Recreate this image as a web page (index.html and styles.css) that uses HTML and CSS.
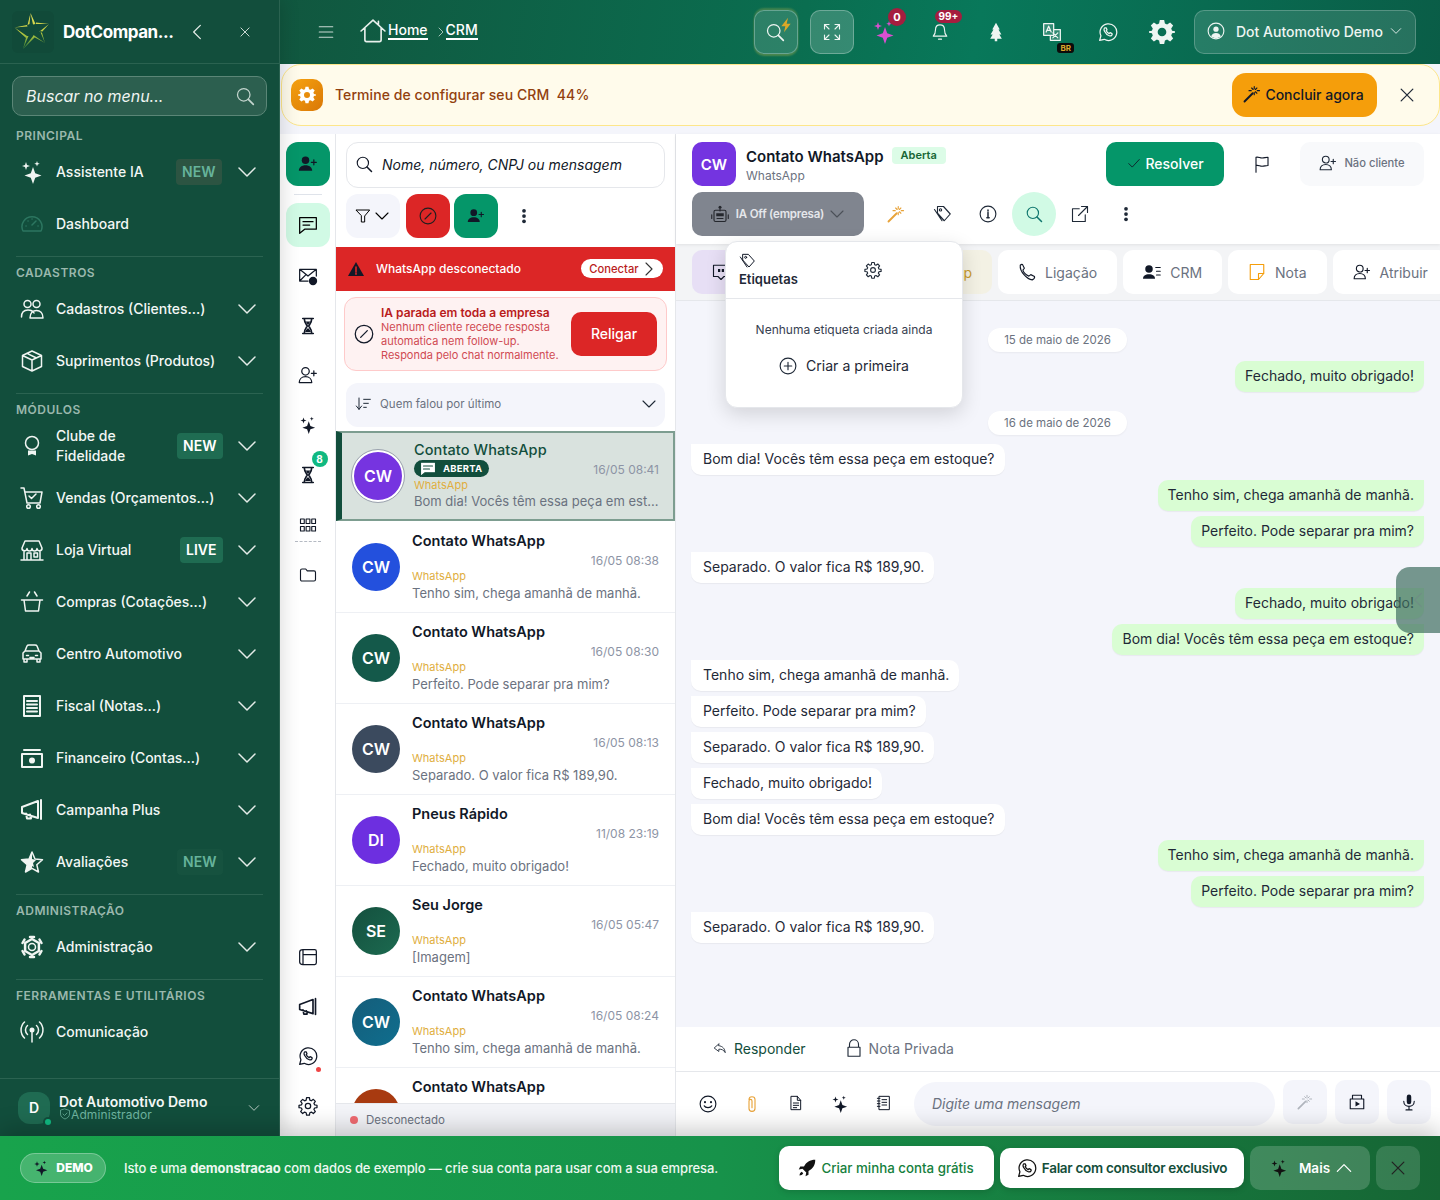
FILE: index.html
```html
<!DOCTYPE html>
<html lang="pt-BR">
<head>
<meta charset="utf-8">
<title>CRM</title>
<link rel="stylesheet" href="styles.css">
</head>
<body>
<svg class="defs" width="0" height="0" aria-hidden="true">
<defs>
<symbol id="i-down" viewBox="0 0 24 24"><path d="M4 8l8 8 8-8"/></symbol>
<symbol id="i-up" viewBox="0 0 24 24"><path d="M4 16l8-8 8 8"/></symbol>
<symbol id="i-left" viewBox="0 0 24 24"><path d="M16 4l-8 8 8 8"/></symbol>
<symbol id="i-right" viewBox="0 0 24 24"><path d="M8 4l8 8-8 8"/></symbol>
<symbol id="i-x" viewBox="0 0 24 24"><path d="M5 5l14 14M19 5L5 19"/></symbol>
<symbol id="i-search" viewBox="0 0 24 24"><circle cx="10.5" cy="10.5" r="7.5"/><path d="M16 16l6 6" stroke-width="2"/></symbol>
<symbol id="i-spark" viewBox="0 0 24 24"><path class="f" d="M13 7l2.200 6.300L21.500 15.500l-6.300 2.200L13 24l-2.200-6.300L4.500 15.500l6.300-2.200zM6 2l1 3 3 1-3 1-1 3-1-3-3-1 3-1zM17 1l.7 2 2 .7-2 .7-.7 2-.7-2-2-.7 2-.7z"/></symbol>
<symbol id="i-gauge" viewBox="0 0 24 24"><path d="M3 19a10 10 0 1 1 18 0zM12 13l4-4M6 14h.1M8 9h.1M12 7h.1M18 14h.1"/></symbol>
<symbol id="i-users" viewBox="0 0 24 24"><circle cx="7.500" cy="7" r="3.500"/><circle cx="16.500" cy="7" r="3.500"/><path d="M1.500 20c0-5 3-7 6.500-7 4 0 5.500 2 6 3M10 21c0-5 3-7.500 6.500-7.500S23 16 23 21z"/></symbol>
<symbol id="i-box" viewBox="0 0 24 24"><path d="M12 2l9.500 4.500v11L12 22l-9.500-4.500v-11zM2.500 6.500L12 11l9.500-4.500M12 11v11M7 4.300l9.500 4.700"/></symbol>
<symbol id="i-ribbon" viewBox="0 0 24 24"><circle cx="12" cy="9" r="6.500"/><path d="M8 16.500v5l4-1.500 4 1.500v-5" class="f"/></symbol>
<symbol id="i-cart" viewBox="0 0 24 24"><path d="M1 2h3l3 15h13l2-11H5M9 10l2.500 2.500L16 8"/><circle cx="8.500" cy="20.500" r="1.800"/><circle cx="18.500" cy="20.500" r="1.800"/></symbol>
<symbol id="i-store" viewBox="0 0 24 24"><path d="M5 3h14l3 7a2.500 2.500 0 0 1-5 .5 2.500 2.500 0 0 1-5 0 2.500 2.500 0 0 1-5 0 2.500 2.500 0 0 1-5-.5zM4 13v9h16v-9M1 22h22M7 15h4v7H7zM14 15h3.500v4H14z"/></symbol>
<symbol id="i-basket" viewBox="0 0 24 24"><path d="M1.500 10h21M4 10l1.500 11h13L20 10M7 6l2.500-4M17 6l-2.500-4"/></symbol>
<symbol id="i-car" viewBox="0 0 24 24"><path d="M5 9l2-5c.300-.700 1-1 2-1h6c1 0 1.700.300 2 1l2 5 2 2v6H3v-6zM5 9h14M4 17v3h3v-3M17 17v3h3v-3M6.500 13.500h2M15.500 13.500h2M10 15.500h4"/></symbol>
<symbol id="i-receipt" viewBox="0 0 24 24"><path d="M4 2h16v20H4zM7 7h10M7 10.500h10M7 14h10M7 17.500h10" stroke-width="2"/></symbol>
<symbol id="i-cash" viewBox="0 0 24 24"><path d="M2 8h20v13H2zM4 4h16" stroke-width="2"/><circle class="f" cx="12" cy="14.500" r="3"/></symbol>
<symbol id="i-mega" viewBox="0 0 24 24"><path d="M2 9l16-6v17L2 15zM21 2v19M6 15.500l1 5h4l-1-4" stroke-width="2"/></symbol>
<symbol id="i-star" viewBox="0 0 24 24"><path d="M12 2l3 7 7.500.7-5.700 5 1.700 7.300L12 18.300 5.500 22l1.700-7.300-5.700-5L9 9z"/><path class="f" d="M12 2v16.300L5.500 22l1.700-7.300-5.700-5L9 9z"/><path class="f" d="M12 9l4 1-3 3 1 4-2-1z"/></symbol>
<symbol id="i-cogh" viewBox="0 0 24 24"><path d="M12 4l6.900 4v8L12 20l-6.900-4V8z" stroke-width="2.500"/><path d="M10 2h4M10 22h4M2.500 8l2-3.500M21.500 8l-2-3.500M2.500 16l2 3.500M21.500 16l-2 3.500" stroke-width="2.500"/><circle cx="12" cy="12" r="3.500"/></symbol>
<symbol id="i-radio" viewBox="0 0 24 24"><circle class="f" cx="12" cy="10" r="2.500"/><path d="M12 10v12M7.500 14.500a6 6 0 0 1 0-9M16.500 5.500a6 6 0 0 1 0 9M4.500 18a11 11 0 0 1 0-16M19.500 2a11 11 0 0 1 0 16"/></symbol>
<symbol id="i-menu" viewBox="0 0 24 24"><path d="M3 5h18M3 12h18M3 19h18"/></symbol>
<symbol id="i-home" viewBox="0 0 24 24"><path d="M1 12L12 2l11 10M4.500 9v11c0 1 .5 1.800 1.500 1.800h12c1 0 1.500-.8 1.500-1.800V9M17 3v3"/></symbol>
<symbol id="i-expand" viewBox="0 0 24 24"><path d="M2 8V2h6M2 2l6 6M22 8V2h-6M22 2l-6 6M2 16v6h6M2 22l6-6M22 16v6h-6M22 22l-6-6"/></symbol>
<symbol id="i-bolt" viewBox="0 0 24 24"><path class="f" d="M15 1L5 14h6l-2 9 10-13h-6z"/></symbol>
<symbol id="i-bell" viewBox="0 0 24 24"><path d="M12 2.500c-4 0-6 3-6 6.500 0 5-1.500 7-3 8.500h18c-1.500-1.500-3-3.500-3-8.500 0-3.500-2-6.500-6-6.500zM10 21.500h4"/></symbol>
<symbol id="i-tree" viewBox="0 0 24 24"><path class="f" d="M12 1l4.500 8H15l3.500 6H16l3 5h-5.500v3h-3v-3H5l3-5H5.500L9 9H7.500z"/></symbol>
<symbol id="i-translate" viewBox="0 0 24 24"><path class="f" d="M2 2h12v14H2zM14 9h8v13H10v-6h4z" style="fill-opacity:.18"/><path d="M2 2h12v14H2zM14 9h8v13H10v-6"/><path d="M5 12l3-7 3 7M6 10h4M13 13l6 6M19 13l-6 6"/></symbol>
<symbol id="i-wa" viewBox="0 0 24 24"><path d="M2 22l1.500-5.500A10 10 0 1 1 7.500 20.800zM8 7c-1 1-1 2.500 0 4.500 1.500 3 4 4.500 5.500 5 1.500.4 3 0 3.500-1.500l-.2-1-2.300-1.200-1 1.200c-1.500-.5-3-2-3.700-3.700l1-1L9.800 7z"/></symbol>
<symbol id="i-gear" viewBox="0 0 24 24"><path class="f" fill-rule="evenodd" d="M10 1h4l.7 3.200 2 .8 2.800-1.800 2.800 2.800L20.500 8.800l.8 2 3.200.7v1l-3.200.7-.8 2 1.800 2.800-2.800 2.800-2.800-1.800-2 .8-.7 3.200h-4l-.7-3.200-2-.8-2.800 1.800-2.800-2.800L3.500 15.200l-.8-2L-.5 12.500v-1l3.200-.7.8-2L1.700 6 4.500 3.200 7.300 5l2-.8zM12 8a4 4 0 1 0 0 8 4 4 0 0 0 0-8z"/></symbol>
<symbol id="i-usercircle" viewBox="0 0 24 24"><circle cx="12" cy="12" r="10.500"/><circle cx="12" cy="9.500" r="3.500" class="f"/><path class="f" d="M5.500 19c1-3 3.500-4.500 6.500-4.500s5.500 1.500 6.500 4.500c-1.500 1.500-4 2.500-6.500 2.500S7 20.500 5.500 19z"/></symbol>
<symbol id="i-gearl" viewBox="0 0 24 24"><circle cx="12" cy="12" r="3.200"/><path d="M10.300 2h3.400l.5 2.900 1.800.8 2.400-1.700 2.400 2.400-1.700 2.400.8 1.800 2.900.5v2.800l-2.900.5-.8 1.800 1.700 2.400-2.400 2.400-2.400-1.700-1.800.8-.5 2.900h-3.400l-.5-2.900-1.800-.8L5.600 21l-2.400-2.400 1.700-2.400-.8-1.800L1.200 14v-2.800l2.900-.5.800-1.800L3.200 6.500l2.400-2.400L8 5.800l1.800-.8z"/></symbol>
<symbol id="i-wand" viewBox="0 0 24 24"><path d="M2 22L13 11" stroke-width="2.500"/><path d="M15 2v3M15 10v3M19 7.500h3M8 7.500h3M11.500 4l2 2M18.500 4l-2 2M18.500 11l-2-2" /></symbol>
<symbol id="i-userplusf" viewBox="0 0 24 24"><circle class="f" cx="9" cy="7.500" r="4.500"/><path class="f" d="M1 20c0-4 3.500-6.500 8-6.500s8 2.500 8 6.500z"/><path d="M19 7v6M16 10h6"/></symbol>
<symbol id="i-userplus" viewBox="0 0 24 24"><circle cx="9" cy="7.500" r="4.500"/><path d="M1.500 21c0-4 3-7 7.500-7s7.500 3 7.500 7zM19 7v6M16 10h6"/></symbol>
<symbol id="i-chat" viewBox="0 0 24 24"><path d="M2 3h20v14H8l-6 5zM6 8h12M6 12h8"/></symbol>
<symbol id="i-mailclock" viewBox="0 0 24 24"><path d="M12 18H2V4h20v8M2 4l10 8 10-8M2 18l7-7"/><circle class="f" cx="18" cy="18" r="5"/></symbol>
<symbol id="i-hour" viewBox="0 0 24 24"><path d="M5 2h14M5 22h14M7 2c0 5 2 7 4 10-2 3-4 5-4 10M17 2c0 5-2 7-4 10 2 3 4 5 4 10" stroke-width="2.200"/><path class="f" d="M8 20c1-3 3-4.500 4-5.500 1 1 3 2.500 4 5.500zM9 6h6l-3 5z"/></symbol>
<symbol id="i-grid" viewBox="0 0 24 24"><path d="M2 4h5v6H2zM9.500 4h5v6h-5zM17 4h5v6h-5zM2 14h5v6H2zM9.500 14h5v6h-5zM17 14h5v6h-5z"/></symbol>
<symbol id="i-folder" viewBox="0 0 24 24"><path d="M2 6c0-1 .7-2 2-2h5l2 2.500h9c1.200 0 2 .8 2 2V18c0 1-.8 2-2 2H4c-1.300 0-2-1-2-2z"/></symbol>
<symbol id="i-cards" viewBox="0 0 24 24"><path d="M6 3h14c1 0 2 1 2 2v14c0 1-1 2-2 2H6zM6 9h16M6 3C3.500 3 2 4 2 6v12c0 2 1.500 3 4 3" /></symbol>
<symbol id="i-filter" viewBox="0 0 24 24"><path d="M2 3h20l-7.500 9v9h-5v-9z"/></symbol>
<symbol id="i-ban" viewBox="0 0 24 24"><circle cx="12" cy="12" r="10.500"/><path d="M8 16l8-8"/></symbol>
<symbol id="i-alert" viewBox="0 0 24 24"><path class="f" d="M12 1.500L24 22.500H0z"/><path d="M12 9v7M12 18.200v1.500" style="stroke:#dc2626" stroke-width="2.400"/></symbol>
<symbol id="i-sort" viewBox="0 0 24 24"><path d="M6 3v17M2 15l4 5 4-5M13 5h10M13 11h7M13 17h4"/></symbol>
<symbol id="i-flag" viewBox="0 0 24 24"><path d="M4 23V3c3-1 5 1 8 1s5-1 8-1v11c-3 0-5 1-8 1s-5-2-8-1"/></symbol>
<symbol id="i-check" viewBox="0 0 24 24"><path d="M3 13l6 6L21 6"/></symbol>
<symbol id="i-robot" viewBox="0 0 24 24"><circle class="f" cx="12" cy="3" r="2"/><path d="M12 5v3"/><path d="M4 9c0-1 1-2 2-2h12c1 0 2 1 2 2v11c0 1-1 2-2 2H6c-1 0-2-1-2-2zM1 13v5M23 13v5M8 18h8"/><path class="f" d="M7 11h10v4H7z"/></symbol>
<symbol id="i-tag" viewBox="0 0 24 24"><path d="M6 2h8l9 10-8 9-9-10zM2 6l10 15" /><circle cx="10" cy="6.500" r="1.500"/></symbol>
<symbol id="i-info" viewBox="0 0 24 24"><circle cx="12" cy="12" r="10.500"/><path d="M12 10v7M10.500 17h3M12 6.500v1.500" stroke-width="2"/></symbol>
<symbol id="i-ext" viewBox="0 0 24 24"><path d="M11 5H2v17h17v-9M10 14L22 2M14 2h8v8"/></symbol>
<symbol id="i-dots" viewBox="0 0 24 24"><circle class="f" cx="12" cy="5" r="2.500"/><circle class="f" cx="12" cy="12" r="2.500"/><circle class="f" cx="12" cy="19" r="2.500"/></symbol>
<symbol id="i-quote" viewBox="0 0 24 24"><path d="M2 3h20v15h-6l-4 4-4-4H2z"/><path d="M8 8h3v4H8zM13 8h3v4h-3z" class="f"/></symbol>
<symbol id="i-phone" viewBox="0 0 24 24"><path d="M3 3c1-1 2-1.500 3-1l2.500 5-2 2.500c1 3 4.500 6.500 8 8l2.500-2 5 2.500c.5 1.500-1 3.500-3 4.500C12 22 2 11 3 3z"/></symbol>
<symbol id="i-crm" viewBox="0 0 24 24"><circle class="f" cx="8" cy="8" r="5"/><path class="f" d="M0 21c0-4 3-6 8-6s8 2 8 6z"/><path d="M17 6h6M18 11h5M18 16h5"/></symbol>
<symbol id="i-note" viewBox="0 0 24 24"><path d="M3 2h18v12l-7 8H3zM21 14h-7v8"/></symbol>
<symbol id="i-plusc" viewBox="0 0 24 24"><circle cx="12" cy="12" r="10.500"/><path d="M12 7v10M7 12h10"/></symbol>
<symbol id="i-reply" viewBox="0 0 24 24"><path d="M10 5l-8 7 8 6v-4c5 0 8 1 11 6-1-7-4-11-11-12z"/></symbol>
<symbol id="i-lock" viewBox="0 0 24 24"><path d="M6 11V7a6 6 0 0 1 12 0v4M4 11h16v12H4z"/></symbol>
<symbol id="i-smile" viewBox="0 0 24 24"><circle cx="12" cy="12" r="10.500"/><circle class="f" cx="8" cy="9.500" r="1.400"/><circle class="f" cx="16" cy="9.500" r="1.400"/><path d="M7 14.500c1.500 3 8.500 3 10 0"/></symbol>
<symbol id="i-clip" viewBox="0 0 24 24"><path d="M8 6c0-5 8-5 8 0v12c0 5-8 5-8 0V8c0-3 4-3 4 0v9"/></symbol>
<symbol id="i-doc" viewBox="0 0 24 24"><path d="M5 2h9l5 6v14H5zM14 2v6h5M8 12h8M8 15.500h8M8 19h5"/></symbol>
<symbol id="i-book" viewBox="0 0 24 24"><path d="M5 2h15v20H5zM9 7h7M9 11h7M9 15h7M2 5h4M2 9h4M2 13h4M2 17h4"/></symbol>
<symbol id="i-video" viewBox="0 0 24 24"><path d="M3 8h18v13H3zM6 3h12v5H6z"/><path class="f" d="M10 11l6 3.500-6 3.500z"/></symbol>
<symbol id="i-mic" viewBox="0 0 24 24"><path class="f" d="M9 5a3 3 0 0 1 6 0v7a3 3 0 0 1-6 0z"/><path d="M5 11c0 9 14 9 14 0M12 18v4M8 22.500h8"/></symbol>
<symbol id="i-rocket" viewBox="0 0 24 24"><path class="f" d="M23 1c-7 0-12 3-15 9H3l-2 4 5-1 5 5-1 5 4-2v-5c6-3 9-8 9-15zM5 17c-2 1-3 3-3 5 2 0 4-1 5-3z"/></symbol>
<symbol id="i-shield" viewBox="0 0 24 24"><path d="M12 2l9 3v7c0 5-4 8-9 10-5-2-9-5-9-10V5zM8 12l3 3 5-5"/></symbol>
</defs>
</svg>

<div class="app">
  <div class="app-main">
    <aside class="sidebar">
      <div class="brand">
        <div class="logo">
          <svg viewBox="15 14 36 36" class="logo-star"><defs><linearGradient id="lg" gradientUnits="userSpaceOnUse" x1="32" y1="13" x2="32" y2="49"><stop offset="0" stop-color="#efe35a"/><stop offset=".55" stop-color="#b9c93f"/><stop offset="1" stop-color="#3f8a3a"/></linearGradient></defs><path fill="url(#lg)" d="M30.500 13L35.500 24 33 24.500zM30.500 13L27.500 25 29.500 24zM49 24L36 24 36 22.500zM49 24L39.500 31.500 41 33zM45 43L40 31 41.500 31zM45 43L33 36.500 33.500 35zM23 49L33.500 35.500 35 37zM23 49L26.500 36 28.500 36zM14.500 27.500L27 25 27.500 26.500zM14.500 27.500L27 36 26 38z"/></svg>
        </div>
        <span class="brand-name">DotCompan...</span>
        <svg class="ic s20 brand-back"><use href="#i-left"/></svg>
        <svg class="ic s14 brand-close"><use href="#i-x"/></svg>
      </div>
      <div class="menu-search"><span>Buscar no menu...</span><svg class="ic s20"><use href="#i-search"/></svg></div>
      <nav class="nav">
        <div class="nav-label first">PRINCIPAL</div>
        <a class="nav-item"><svg class="ic s24"><use href="#i-spark"/></svg><span class="nav-text">Assistente IA</span><em class="tag dim warm">NEW</em><svg class="ic s24 chev"><use href="#i-down"/></svg></a>
        <a class="nav-item"><svg class="ic s24 faint"><use href="#i-gauge"/></svg><span class="nav-text">Dashboard</span></a>
        <div class="nav-div"></div>
        <div class="nav-label">CADASTROS</div>
        <a class="nav-item"><svg class="ic s24"><use href="#i-users"/></svg><span class="nav-text">Cadastros (Clientes...)</span><svg class="ic s24 chev"><use href="#i-down"/></svg></a>
        <a class="nav-item"><svg class="ic s24"><use href="#i-box"/></svg><span class="nav-text">Suprimentos (Produtos)</span><svg class="ic s24 chev"><use href="#i-down"/></svg></a>
        <div class="nav-div"></div>
        <div class="nav-label">MÓDULOS</div>
        <a class="nav-item"><svg class="ic s24"><use href="#i-ribbon"/></svg><span class="nav-text two">Clube de Fidelidade</span><em class="tag">NEW</em><svg class="ic s24 chev"><use href="#i-down"/></svg></a>
        <a class="nav-item"><svg class="ic s24"><use href="#i-cart"/></svg><span class="nav-text">Vendas (Orçamentos...)</span><svg class="ic s24 chev"><use href="#i-down"/></svg></a>
        <a class="nav-item"><svg class="ic s24"><use href="#i-store"/></svg><span class="nav-text">Loja Virtual</span><em class="tag">LIVE</em><svg class="ic s24 chev"><use href="#i-down"/></svg></a>
        <a class="nav-item"><svg class="ic s24"><use href="#i-basket"/></svg><span class="nav-text">Compras (Cotações...)</span><svg class="ic s24 chev"><use href="#i-down"/></svg></a>
        <a class="nav-item"><svg class="ic s24"><use href="#i-car"/></svg><span class="nav-text">Centro Automotivo</span><svg class="ic s24 chev"><use href="#i-down"/></svg></a>
        <a class="nav-item"><svg class="ic s24"><use href="#i-receipt"/></svg><span class="nav-text">Fiscal (Notas...)</span><svg class="ic s24 chev"><use href="#i-down"/></svg></a>
        <a class="nav-item"><svg class="ic s24"><use href="#i-cash"/></svg><span class="nav-text">Financeiro (Contas...)</span><svg class="ic s24 chev"><use href="#i-down"/></svg></a>
        <a class="nav-item"><svg class="ic s24"><use href="#i-mega"/></svg><span class="nav-text">Campanha Plus</span><svg class="ic s24 chev"><use href="#i-down"/></svg></a>
        <a class="nav-item"><svg class="ic s24"><use href="#i-star"/></svg><span class="nav-text">Avaliações</span><em class="tag dim">NEW</em><svg class="ic s24 chev"><use href="#i-down"/></svg></a>
        <div class="nav-div"></div>
        <div class="nav-label">ADMINISTRAÇÃO</div>
        <a class="nav-item"><svg class="ic s24"><use href="#i-cogh"/></svg><span class="nav-text">Administração</span><svg class="ic s24 chev"><use href="#i-down"/></svg></a>
        <div class="nav-div"></div>
        <div class="nav-label">FERRAMENTAS E UTILITÁRIOS</div>
        <a class="nav-item"><svg class="ic s24"><use href="#i-radio"/></svg><span class="nav-text">Comunicação</span></a>
      </nav>
      <div class="side-user">
        <div class="side-av">D<i></i></div>
        <div class="side-who"><strong>Dot Automotivo Demo</strong><small><svg class="ic s12"><use href="#i-shield"/></svg>Administrador</small></div>
        <svg class="ic s14 side-chev"><use href="#i-down"/></svg>
      </div>
    </aside>

    <div class="content">
      <header class="topbar">
        <svg class="ic s18 burger"><use href="#i-menu"/></svg>
        <div class="crumbs">
          <svg class="ic s26"><use href="#i-home"/></svg>
          <a>Home</a><svg class="ic s12 crumb-sep"><use href="#i-right"/></svg><a>CRM</a>
        </div>
        <div class="top-right">
          <button class="glass gold"><svg class="ic s20"><use href="#i-search"/></svg><svg class="ic s16 bolt"><use href="#i-bolt"/></svg></button>
          <button class="glass lighter"><svg class="ic s18"><use href="#i-expand"/></svg></button>
          <div class="top-icons">
            <span class="t-ic"><svg class="ic s24 pink"><use href="#i-spark"/></svg><b class="bdg round">0</b></span>
            <span class="t-ic"><svg class="ic s18"><use href="#i-bell"/></svg><b class="bdg wide">99+</b></span>
            <span class="t-ic"><svg class="ic s20"><use href="#i-tree"/></svg></span>
            <span class="t-ic"><svg class="ic s20"><use href="#i-translate"/></svg><b class="bdg-br">BR</b></span>
            <span class="t-ic"><svg class="ic s20"><use href="#i-wa"/></svg></span>
            <span class="t-ic t-gear"><svg class="ic s26"><use href="#i-gear"/></svg></span>
          </div>
          <button class="user-btn"><svg class="ic s18"><use href="#i-usercircle"/></svg><span>Dot Automotivo Demo</span><svg class="ic s14"><use href="#i-down"/></svg></button>
        </div>
      </header>

      <section class="setup">
        <span class="setup-ic"><svg class="ic s18"><use href="#i-gear"/></svg></span>
        <p>Termine de configurar seu CRM&nbsp; 44%</p>
        <button class="setup-go"><svg class="ic s18"><use href="#i-wand"/></svg>Concluir agora</button>
        <svg class="ic s20 setup-x"><use href="#i-x"/></svg>
      </section>

      <main class="work">
        <div class="rail">
          <button class="rail-btn solid"><svg class="ic s20"><use href="#i-userplusf"/></svg></button>
          <div class="rail-sep"></div>
          <button class="rail-btn active"><svg class="ic s20"><use href="#i-chat"/></svg></button>
          <span class="rail-ic"><svg class="ic s20"><use href="#i-mailclock"/></svg></span>
          <span class="rail-ic"><svg class="ic s18"><use href="#i-hour"/></svg></span>
          <span class="rail-ic"><svg class="ic s20"><use href="#i-userplus"/></svg></span>
          <span class="rail-ic"><svg class="ic s18"><use href="#i-spark"/></svg></span>
          <span class="rail-ic"><svg class="ic s18"><use href="#i-hour"/></svg><b class="rail-count">8</b></span>
          <span class="rail-ic"><svg class="ic s18"><use href="#i-grid"/></svg></span>
          <div class="rail-dash"></div>
          <span class="rail-ic folder"><svg class="ic s18"><use href="#i-folder"/></svg></span>
          <div class="rail-bottom">
            <span class="rail-ic"><svg class="ic s20"><use href="#i-cards"/></svg></span>
            <span class="rail-ic"><svg class="ic s20"><use href="#i-mega"/></svg></span>
            <span class="rail-ic"><svg class="ic s20"><use href="#i-wa"/></svg><i class="rail-dot"></i></span>
            <span class="rail-ic"><svg class="ic s20"><use href="#i-gearl"/></svg></span>
          </div>
        </div>

        <div class="list">
          <div class="list-tools">
            <div class="find"><svg class="ic s18"><use href="#i-search"/></svg><span>Nome, número, CNPJ ou mensagem</span></div>
            <div class="tool-row">
              <button class="tool filter"><svg class="ic s16"><use href="#i-filter"/></svg><svg class="ic s18"><use href="#i-down"/></svg></button>
              <button class="tool red"><svg class="ic s18"><use href="#i-ban"/></svg></button>
              <button class="tool green"><svg class="ic s18"><use href="#i-userplusf"/></svg></button>
              <span class="tool-dots"><svg class="ic s18"><use href="#i-dots"/></svg></span>
            </div>
          </div>
          <div class="wa-alert">
            <svg class="ic s16 alert-ic"><use href="#i-alert"/></svg>
            <span>WhatsApp desconectado</span>
            <button>Conectar<svg class="ic s18"><use href="#i-right"/></svg></button>
          </div>
          <div class="ia-box">
            <svg class="ic s20"><use href="#i-ban"/></svg>
            <div class="ia-text"><strong>IA parada em toda a empresa</strong><span>Nenhum cliente recebe resposta automatica nem follow-up. Responda pelo chat normalmente.</span></div>
            <button>Religar</button>
          </div>
          <div class="sorter"><svg class="ic s16"><use href="#i-sort"/></svg><span>Quem falou por último</span><svg class="ic s18"><use href="#i-down"/></svg></div>

          <div class="convs">
            <article class="conv selected">
              <div class="av ring c-purple">CW</div>
              <div class="conv-b">
                <h3>Contato WhatsApp</h3>
                <div class="sel-row"><span class="open-pill"><svg class="ic s18"><use href="#i-chat"/></svg>ABERTA</span><time>16/05 08:41</time></div>
                <div class="src">WhatsApp</div>
                <p>Bom dia! Vocês têm essa peça em est...</p>
              </div>
            </article>
            <article class="conv"><div class="av c-blue">CW</div><div class="conv-b"><h3>Contato WhatsApp</h3><time>16/05 08:38</time><div class="src">WhatsApp</div><p>Tenho sim, chega amanhã de manhã.</p></div></article>
            <article class="conv"><div class="av c-green">CW</div><div class="conv-b"><h3>Contato WhatsApp</h3><time>16/05 08:30</time><div class="src">WhatsApp</div><p>Perfeito. Pode separar pra mim?</p></div></article>
            <article class="conv"><div class="av c-slate">CW</div><div class="conv-b"><h3>Contato WhatsApp</h3><time>16/05 08:13</time><div class="src">WhatsApp</div><p>Separado. O valor fica R$ 189,90.</p></div></article>
            <article class="conv"><div class="av c-violet">DI</div><div class="conv-b"><h3>Pneus Rápido</h3><time>11/08 23:19</time><div class="src">WhatsApp</div><p>Fechado, muito obrigado!</p></div></article>
            <article class="conv"><div class="av c-se">SE</div><div class="conv-b"><h3>Seu Jorge</h3><time>16/05 05:47</time><div class="src">WhatsApp</div><p>[Imagem]</p></div></article>
            <article class="conv"><div class="av c-teal">CW</div><div class="conv-b"><h3>Contato WhatsApp</h3><time>16/05 08:24</time><div class="src">WhatsApp</div><p>Tenho sim, chega amanhã de manhã.</p></div></article>
            <article class="conv last"><div class="av c-rust"></div><div class="conv-b"><h3>Contato WhatsApp</h3></div></article>
          </div>
          <div class="list-foot"><i></i>Desconectado</div>
        </div>

        <div class="chat">
          <div class="chat-head">
            <div class="head-row">
              <div class="chat-av">CW</div>
              <div class="chat-who"><div><strong>Contato WhatsApp</strong><span class="status">Aberta</span></div><small>WhatsApp</small></div>
              <button class="resolve"><svg class="ic s14"><use href="#i-check"/></svg>Resolver</button>
              <span class="flag"><svg class="ic s18"><use href="#i-flag"/></svg></span>
              <button class="noclient"><svg class="ic s18"><use href="#i-userplus"/></svg>Não cliente</button>
            </div>
            <div class="head-row second">
              <button class="ia-off"><svg class="ic s18"><use href="#i-robot"/></svg><span>IA Off (empresa)</span><svg class="ic s18"><use href="#i-down"/></svg></button>
              <div class="head-tools">
                <span class="h-ic wand"><svg class="ic s18"><use href="#i-wand"/></svg></span>
                <span class="h-ic"><svg class="ic s18"><use href="#i-tag"/></svg></span>
                <span class="h-ic"><svg class="ic s18"><use href="#i-info"/></svg></span>
                <span class="h-ic on"><svg class="ic s18"><use href="#i-search"/></svg></span>
                <span class="h-ic"><svg class="ic s18"><use href="#i-ext"/></svg></span>
                <span class="h-ic"><svg class="ic s18"><use href="#i-dots"/></svg></span>
              </div>
            </div>
          </div>
          <div class="tabs">
            <a class="tab t-purple"><svg class="ic s18"><use href="#i-quote"/></svg></a>
            <a class="tab t-beige">WhatsApp</a>
            <a class="tab"><svg class="ic s18"><use href="#i-phone"/></svg>Ligação</a>
            <a class="tab"><svg class="ic s18"><use href="#i-crm"/></svg>CRM</a>
            <a class="tab"><svg class="ic s18 amber"><use href="#i-note"/></svg>Nota</a>
            <a class="tab"><svg class="ic s18"><use href="#i-userplus"/></svg>Atribuir</a>
          </div>
          <div class="msgs">
            <div class="date">15 de maio de 2026</div>
            <div class="m out">Fechado, muito obrigado!</div>
            <div class="date">16 de maio de 2026</div>
            <div class="m in">Bom dia! Vocês têm essa peça em estoque?</div>
            <div class="m out">Tenho sim, chega amanhã de manhã.</div>
            <div class="m out">Perfeito. Pode separar pra mim?</div>
            <div class="m in">Separado. O valor fica R$ 189,90.</div>
            <div class="m out">Fechado, muito obrigado!</div>
            <div class="m out">Bom dia! Vocês têm essa peça em estoque?</div>
            <div class="m in">Tenho sim, chega amanhã de manhã.</div>
            <div class="m in">Perfeito. Pode separar pra mim?</div>
            <div class="m in">Separado. O valor fica R$ 189,90.</div>
            <div class="m in">Fechado, muito obrigado!</div>
            <div class="m in">Bom dia! Vocês têm essa peça em estoque?</div>
            <div class="m out">Tenho sim, chega amanhã de manhã.</div>
            <div class="m out">Perfeito. Pode separar pra mim?</div>
            <div class="m in">Separado. O valor fica R$ 189,90.</div>
          </div>
          <div class="reply-tabs">
            <a class="rt active"><svg class="ic s14"><use href="#i-reply"/></svg>Responder</a>
            <a class="rt"><svg class="ic s18"><use href="#i-lock"/></svg>Nota Privada</a>
          </div>
          <div class="composer">
            <div class="comp-icons">
              <span><svg class="ic s18"><use href="#i-smile"/></svg></span>
              <span class="clip"><svg class="ic s18"><use href="#i-clip"/></svg></span>
              <span><svg class="ic s16"><use href="#i-doc"/></svg></span>
              <span><svg class="ic s18"><use href="#i-spark"/></svg></span>
              <span><svg class="ic s16"><use href="#i-book"/></svg></span>
            </div>
            <div class="comp-input">Digite uma mensagem</div>
            <button class="comp-btn pale"><svg class="ic s16"><use href="#i-wand"/></svg></button>
            <button class="comp-btn"><svg class="ic s18"><use href="#i-video"/></svg></button>
            <button class="comp-btn"><svg class="ic s18"><use href="#i-mic"/></svg></button>
          </div>

          <div class="popup">
            <div class="pop-head">
              <div class="pop-title"><svg class="ic s16"><use href="#i-tag"/></svg><strong>Etiquetas</strong></div>
              <svg class="ic s18 pop-gear"><use href="#i-gearl"/></svg>
            </div>
            <div class="pop-body">
              <p>Nenhuma etiqueta criada ainda</p>
              <a><svg class="ic s18"><use href="#i-plusc"/></svg>Criar a primeira</a>
            </div>
          </div>
          <div class="handle"><svg class="ic s20"><use href="#i-left"/></svg></div>
        </div>
      </main>
    </div>
  </div>

  <footer class="demo">
    <span class="demo-pill"><svg class="ic s16"><use href="#i-spark"/></svg>DEMO</span>
    <p>Isto e uma <strong>demonstracao</strong> com dados de exemplo — crie sua conta para usar com a sua empresa.</p>
    <button class="d-btn create"><svg class="ic s18"><use href="#i-rocket"/></svg>Criar minha conta grátis</button>
    <button class="d-btn talk"><svg class="ic s20"><use href="#i-wa"/></svg>Falar com consultor exclusivo</button>
    <button class="d-more"><svg class="ic s18"><use href="#i-spark"/></svg><span>Mais</span><svg class="ic s20"><use href="#i-up"/></svg></button>
    <button class="d-close"><svg class="ic s20"><use href="#i-x"/></svg></button>
  </footer>
</div>
</body>
</html>
```

FILE: styles.css
```css
* { box-sizing: border-box; }
html, body { margin: 0; height: 100%; }
body { font-family: "Inter", "Liberation Sans", sans-serif; color: #111827; background: #f4f5fb; overflow: hidden; }
button { font: inherit; border: 0; cursor: pointer; padding: 0; }
h3, p { margin: 0; }
a { color: inherit; text-decoration: none; }
em { font-style: normal; }
.defs { position: absolute; }

.ic { display: block; flex: none; fill: none; stroke: currentColor; stroke-width: 1.500; stroke-linecap: round; stroke-linejoin: round; overflow: visible; }
symbol .f, .f { fill: currentColor; stroke: none; }
.s10 { width: 10px; height: 10px; }
.s12 { width: 12px; height: 12px; }
.s14 { width: 14px; height: 14px; }
.s16 { width: 16px; height: 16px; }
.s18 { width: 18px; height: 18px; }
.s20 { width: 20px; height: 20px; }
.s24 { width: 24px; height: 24px; }
.s26 { width: 26px; height: 26px; }

.app { width: 1440px; height: 1200px; display: flex; flex-direction: column; overflow: hidden; }
.app-main { flex: 1; display: flex; min-height: 0; }

/* Sidebar */
.sidebar { width: 280px; flex: none; background: #124e3c; color: #f3f7f5; display: flex; flex-direction: column; border-right: 1px solid #2a6250; box-shadow: 4px 0 16px rgba(0,0,0,.12); position: relative; z-index: 2; }
.brand { height: 64px; flex: none; display: flex; align-items: center; padding: 0 0 0 12px; border-bottom: 1px solid #2a6250; }
.logo { width: 42px; height: 42px; flex: none; background: #114a39; border-radius: 6px; display: flex; align-items: center; justify-content: center; }
.logo-star { width: 36px; height: 36px; display: block; overflow: visible; }
.brand-name { margin-left: 9px; width: 118px; font-size: 17px; font-weight: 700; color: #fff; letter-spacing: -.45px; white-space: nowrap; }
.brand-back { margin-left: 6px; color: #e4ece8; }
.brand-close { margin-left: 31px; color: #e4ece8; }
.menu-search { margin: 12px 12px 0; height: 40px; flex: none; border: 1px solid #5b8677; border-radius: 10px; background: #2c5f4f; display: flex; align-items: center; justify-content: space-between; padding: 0 11px 0 13px; font-size: 16px; font-style: italic; color: #f0f5f2; }
.menu-search .ic { color: #c4d5ce; }
.nav { flex: 1; min-height: 0; padding: 0; }
.nav-label { height: 26px; padding: 8px 0 0 16px; font-size: 12px; line-height: 16px; font-weight: 600; color: #9ab8ad; letter-spacing: .5px; white-space: nowrap; }
.nav-label.first { height: 30px; padding-top: 12px; }
.nav-div { height: 1px; margin: 6px 16px 0; background: #2b6351; }
.nav-item { height: 52px; display: flex; align-items: center; padding: 0 20px 0 20px; }
.nav-item > .ic:first-child { margin-right: 12px; color: #f0f5f2; }
.nav-item > .ic.faint { color: #2c7660; }
.nav-text { flex: 1; font-size: 14px; font-weight: 500; line-height: 20px; white-space: nowrap; }
.nav-text.two { white-space: normal; width: 90px; flex: none; margin-right: auto; }
.tag { font-size: 14px; font-weight: 600; line-height: 26px; padding: 0 6.500px; border-radius: 4px; background: #1f6c52; color: #fff; margin-right: 12px; }
.tag.dim { background: #16523f; color: #66b39b; }
.tag.warm { background: #2c5442; margin-right: 13px; }
.chev { color: #e4ece8; }
.side-user { height: 58px; flex: none; border-top: 1px solid #2b6351; display: flex; align-items: center; padding: 0 18px; position: relative; }
.side-av { width: 32px; height: 32px; border-radius: 12px; background: #1f6b52; display: flex; align-items: center; justify-content: center; font-size: 14px; font-weight: 600; color: #fff; position: relative; }
.side-av i { position: absolute; right: -1px; bottom: -1px; width: 6px; height: 6px; border-radius: 50%; background: #10b981; box-shadow: 0 0 0 2px #124e3c; }
.side-who { margin-left: 9px; flex: 1; display: flex; flex-direction: column; }
.side-who strong { font-size: 14px; font-weight: 600; line-height: 13px; white-space: nowrap; }
.side-who small { display: flex; align-items: center; font-size: 12px; line-height: 13px; letter-spacing: .1px; color: #6fb5a0; }
.side-chev { color: #cdd9d4; }

/* Content */
.content { flex: 1; min-width: 0; display: flex; flex-direction: column; }
.topbar { height: 64px; flex: none; display: flex; align-items: center; padding: 0 24px 0 37px; background: linear-gradient(100deg, #11573f 0%, #0a6e50 45%, #08785a 60%, #0a5d47 100%); color: #eef5f2; position: relative; z-index: 1; }
.burger { color: #c9d9d3; }
.crumbs { margin-left: 25px; display: flex; align-items: center; font-size: 14px; font-weight: 500; color: #fff; }
.crumbs > .ic:first-child { color: #e8f0ec; margin-right: 2px; margin-top: -2px; }
.crumbs a { border-bottom: 2px solid #fff; line-height: 17px; margin-top: -4px; }
.crumb-sep { margin: 0 -1px 0 7px; color: #d5e3de; }
.top-right { margin-left: auto; display: flex; align-items: center; }
.glass { width: 44px; height: 44px; border-radius: 10px; background: rgba(255,255,255,.14); border: 1px solid rgba(255,255,255,.28); color: #eef5f2; display: flex; align-items: center; justify-content: center; position: relative; }
.glass.gold { box-shadow: 0 -2px 2px rgba(232,200,80,.25), 0 2px 2px rgba(232,200,80,.3); margin-right: 12px; }
.glass.gold .ic:first-child { margin-left: -2px; }
.bolt { position: absolute; top: 6px; right: 3px; color: #dba827; }
.glass.lighter { background: rgba(255,255,255,.18); }
.top-icons { margin-left: 8px; display: flex; gap: 12px; }
.t-ic { width: 44px; height: 44px; display: flex; align-items: center; justify-content: center; position: relative; }
.t-ic.t-gear { margin-left: -2px; }
.pink { color: #d94fd0; }
.bdg { position: absolute; background: #a51d3f; color: #fff; font-size: 10px; font-weight: 700; text-align: center; }
.bdg.round { top: -2px; right: 0; width: 18px; height: 18px; line-height: 18px; border-radius: 9px; font-size: 11px; }
.bdg.wide { top: 0; right: 0; width: 27px; height: 13px; line-height: 13px; border-radius: 7px; }
.bdg-br { position: absolute; top: 33px; right: 0; background: #0b0b0b; color: #d9a62b; font-size: 8px; font-weight: 700; padding: 0 3px; line-height: 10px; border-radius: 3px; }
.user-btn { margin-left: 10px; width: 222px; height: 44px; border-radius: 10px; background: rgba(255,255,255,.12); border: 1px solid rgba(255,255,255,.22); color: #eef5f2; display: flex; align-items: center; padding: 0 12px 2px 12px; font-size: 14px; font-weight: 500; }
.user-btn span { margin-left: 11px; flex: 1; text-align: left; white-space: nowrap; }

/* Setup */
.setup { height: 62px; flex: none; margin-left: 1px; background: #fffbeb; border: 1px solid #fde68a; border-radius: 20px; display: flex; align-items: center; padding: 0 22px 0 9px; }
.setup-ic { width: 32px; height: 32px; border-radius: 10px; background: linear-gradient(135deg, #f7a30f, #d97706); color: #fff; display: flex; align-items: center; justify-content: center; }
.setup p { margin: -2px 0 0 12px; font-size: 14px; font-weight: 500; color: #92400e; flex: 1; letter-spacing: .07px; }
.setup-go { width: 145px; height: 44px; border-radius: 14px; background: #f59e0b; color: #111827; display: flex; align-items: center; justify-content: center; gap: 4px; font-size: 14px; font-weight: 500; padding: 0 2px 2px 0; }
.setup-x { margin-left: 20px; color: #1f2937; }

/* Work */
.work { flex: 1; min-height: 0; display: flex; padding-top: 8px; background: #f4f5fb; }
.rail { width: 56px; flex: none; background: #fff; border-right: 1px solid #e5e7eb; display: flex; flex-direction: column; align-items: center; padding-top: 8px; color: #111827; }
.rail-btn { width: 44px; height: 44px; border-radius: 12px; display: flex; align-items: center; justify-content: center; flex: none; }
.rail-btn.solid { background: #059669; color: #111827; }
.rail-btn.active { background: #d1fae5; }
.rail-sep { width: 28px; height: 1px; background: #dfe3ea; margin: 8px 0; flex: none; }
.rail-ic { width: 44px; height: 49.800px; display: flex; align-items: center; justify-content: center; position: relative; flex: none; }
.rail-btn.active + .rail-ic { margin-top: 4px; }
.rail-count { position: absolute; top: 1px; right: 2px; width: 16px; height: 16px; border-radius: 50%; background: #10b981; color: #fff; font-size: 10px; line-height: 16px; text-align: center; font-weight: 700; }
.rail-dash { width: 26px; height: 0; border-top: 1px dashed #b5bac3; margin-top: -9px; flex: none; }
.rail-ic.folder { margin-top: 8px; }
.rail-bottom { margin-top: auto; margin-bottom: 5px; display: flex; flex-direction: column; align-items: center; }
.rail-dot { position: absolute; right: 9px; bottom: 9px; width: 5px; height: 5px; border-radius: 50%; background: #ef4444; }

/* List */
.list { width: 340px; flex: none; background: #fff; border-right: 1px solid #e5e7eb; display: flex; flex-direction: column; min-height: 0; }
.list-tools { padding: 8px 10px 0; flex: none; }
.find { height: 46px; border: 1px solid #e5e7eb; border-radius: 12px; display: flex; align-items: center; padding: 0 8px 2px; gap: 9px; font-size: 14px; font-style: italic; color: #111827; white-space: nowrap; }
.tool-row { display: flex; align-items: center; margin-top: 6px; gap: 6px; height: 44px; }
.tool { height: 44px; border-radius: 12px; width: 44px; display: flex; align-items: center; justify-content: center; }
.tool.filter { width: 54px; background: #f4f5fb; gap: 2px; }
.tool.red { background: #dc2626; color: #1f1f1f; }
.tool.green { background: #059669; color: #111827; margin-left: -2px; }
.tool-dots { margin-left: 6px; width: 28px; display: flex; justify-content: center; color: #1f2937; margin-top: -1px; }
.wa-alert { margin-top: 9px; height: 44px; flex: none; background: #dc2626; display: flex; align-items: center; padding: 0 12px 0 12px; color: #fff; font-size: 12px; font-weight: 500; }
.alert-ic { color: #111827; }
.wa-alert span { margin: -2px 0 0 12px; flex: 1; }
.wa-alert button { width: 82px; height: 19px; background: #fff; border-radius: 10px; color: #b91c1c; font-size: 11.200px; font-weight: 500; display: flex; align-items: center; justify-content: center; gap: 1px; padding-left: 3px; white-space: nowrap; margin-top: -1px; }
.wa-alert button .ic { color: #333; }
.ia-box { margin: 6px 8px 0; height: 74px; flex: none; background: #fef2f2; border: 1px solid #fecaca; border-radius: 12px; display: flex; align-items: center; padding: 0 10px 0 9px; color: #111827; }
.ia-text { margin-left: 7px; width: 190px; flex: none; display: flex; flex-direction: column; font-size: 11px; line-height: 14px; color: #d04a52; }
.ia-text strong { font-size: 12px; line-height: 14px; font-weight: 600; color: #b91c1c; white-space: nowrap; }
.ia-box button { margin-left: auto; width: 86px; height: 44px; flex: none; border-radius: 10px; background: #dc2626; color: #fff; font-size: 14px; font-weight: 500; padding-bottom: 2px; }
.sorter { margin: 12px 10px 0; height: 44px; flex: none; background: #f4f5fb; border-radius: 12px; display: flex; align-items: center; padding: 0 7px 2px 9px; gap: 9px; font-size: 11.500px; color: #6b7280; letter-spacing: .03px; }
.sorter span { flex: 1; }
.sorter .ic { color: #1f2937; }
.convs { margin-top: 4px; flex: 1; min-height: 0; overflow: hidden; }
.conv { height: 91px; display: flex; padding-left: 16px; border-bottom: 1px solid #eef0f4; }
.conv.selected { height: 90px; margin-bottom: 1px; background: #d9e2de; border: 2px solid #7d9d90; border-left: 6px solid #124e3c; padding-left: 10px; }
.av { width: 48px; height: 48px; border-radius: 50%; color: #fff; font-weight: 600; font-size: 16px; display: flex; align-items: center; justify-content: center; flex: none; margin-top: 21px; }
.av.ring { width: 52px; height: 52px; border: 2px solid #fff; outline: 1px solid #9ca3af; margin-top: 17px; }
.c-purple { background: #7634e0; } .c-blue { background: #2350dd; } .c-green { background: #14594a; } .c-slate { background: #3b4a5e; } .c-violet { background: #6d2fe0; }
.c-se { background: linear-gradient(135deg, #14503e, #1c6a50); } .c-teal { background: linear-gradient(135deg, #155d7a, #0f6e8e); } .c-rust { background: #a83a10; }
.conv-b { margin-left: 12px; flex: 1; min-width: 0; padding: 10px 16px 0 0; display: flex; flex-direction: column; }
.conv h3 { font-size: 14.500px; line-height: 18px; font-weight: 600; color: #111827; white-space: nowrap; }
.conv time { font-size: 12px; line-height: 16px; color: #8d94a5; text-align: right; margin-top: 3px; }
.src { font-size: 11px; line-height: 14px; color: #e0ae3e; margin-top: 0; }
.conv p { font-size: 13px; line-height: 18px; color: #6b7280; white-space: nowrap; margin-top: 1px; }
.conv.selected .conv-b { margin-left: 10px; padding: 7px 14px 0 0; }
.conv.selected h3 { color: #124e3c; line-height: 19px; font-weight: 500; letter-spacing: .1px; }
.conv.selected p { margin-top: 0; }
.sel-row { display: flex; align-items: center; justify-content: space-between; height: 17px; margin-top: 1px; }
.sel-row time { margin: 2px 0 0; }
.open-pill { height: 17px; width: 75px; border-radius: 9px; background: #124e3c; color: #fff; font-size: 9.500px; font-weight: 700; display: flex; align-items: center; padding-left: 5px; gap: 6px; letter-spacing: .2px; }
.open-pill .ic { fill: #fff; stroke: #124e3c; }
.conv.selected .src { margin-top: 1px; line-height: 14px; }
.list-foot { height: 33px; flex: none; background: #f3f4f8; border-top: 1px solid #e5e7eb; display: flex; align-items: center; padding-left: 14px; gap: 8px; font-size: 11.500px; color: #6b7280; position: relative; }
.list-foot i { width: 8px; height: 8px; border-radius: 50%; background: #ef6a70; }

/* Chat */
.chat { flex: 1; min-width: 0; display: flex; flex-direction: column; position: relative; background: #f4f5fb; }
.chat-head { background: #fff; height: 110px; flex: none; padding: 8px 16px 0; box-shadow: 0 1px 3px rgba(0,0,0,.08); position: relative; }
.head-row { display: flex; align-items: center; height: 44px; }
.head-row.second { margin-top: 6px; }
.chat-av { width: 44px; height: 44px; border-radius: 10px; background: #7434e0; color: #fff; font-weight: 600; font-size: 15px; display: flex; align-items: center; justify-content: center; flex: none; }
.chat-who { margin-left: 10px; flex: 1; padding-top: 2px; }
.chat-who > div { display: flex; align-items: center; }
.chat-who strong { font-size: 15px; line-height: 22px; font-weight: 600; }
.chat-who small { display: block; font-size: 12px; line-height: 16px; color: #6b7280; margin-top: 0; }
.status { margin-left: 8px; margin-top: -3px; height: 17px; line-height: 17px; padding: 0 9px; border-radius: 4px; font-size: 11px; font-weight: 600; background: #dcfce7; color: #166534; }
.resolve { width: 118px; height: 44px; border-radius: 10px; background: #059669; color: #fff; font-size: 14px; font-weight: 500; display: flex; align-items: center; justify-content: center; gap: 4px; padding: 0 1px 2px 2px; }
.resolve .ic { color: #111827; }
.flag { width: 76px; display: flex; justify-content: center; color: #111827; }
.noclient { width: 124px; height: 44px; border-radius: 10px; background: #f8f9fb; color: #6b7280; font-size: 11.200px; font-weight: 500; display: flex; align-items: center; justify-content: center; gap: 7px; padding-bottom: 2px; }
.noclient .ic { color: #1f2937; }
.ia-off { width: 172px; height: 44px; border-radius: 10px; background: #80858f; color: #e5e7eb; font-size: 11.500px; font-weight: 600; display: flex; align-items: center; justify-content: center; gap: 7px; letter-spacing: -.2px; padding: 0 0 1px 1px; }
.ia-off .ic:first-child { color: #24272d; }
.ia-off .ic:last-child { margin-left: -3px; color: #4b5058; }
.head-tools { margin-left: 10px; display: flex; gap: 2px; }
.h-ic { width: 44px; height: 44px; display: flex; align-items: center; justify-content: center; border-radius: 50%; color: #1f2937; }
.h-ic.wand { color: #e8a33a; }
.h-ic.on { background: #d1fae5; color: #0f766e; }
.tabs { height: 57px; flex: none; display: flex; gap: 6px; padding: 6px 0 0 16px; background: #f3f4f6; border-bottom: 1px solid #e5e7eb; overflow: hidden; }
.tab { height: 44px; padding: 0 20px; background: #fff; border-radius: 10px; display: flex; align-items: center; gap: 9px; font-size: 14px; color: #6b7280; flex: none; white-space: nowrap; }
.tab .ic { color: #111827; }
.tab .ic.amber { color: #f59e0b; }
.t-purple { width: 130px; background: #e7dff5; }
.t-beige { width: 164px; background: #f3f1e4; color: #c99a2e; justify-content: flex-end; }
.msgs { flex: 1; min-height: 0; padding: 27px 16px 0 15px; display: flex; flex-direction: column; gap: 5px; overflow: hidden; }
.m { height: 31px; line-height: 30px; padding: 0 10px 0 12px; font-size: 14px; border-radius: 10px; color: #1f2937; white-space: nowrap; box-shadow: 0 1px 1px rgba(0,0,0,.05); flex: none; }
.m.out { align-self: flex-end; background: #d9fdd3; padding-left: 10px; border-top-right-radius: 0; }
.m.in { align-self: flex-start; background: #fff; border-top-left-radius: 0; }
.date { align-self: center; height: 24px; line-height: 24px; padding: 0 16px; border-radius: 12px; background: #fff; color: #6b7280; font-size: 11.500px; box-shadow: 0 1px 2px rgba(0,0,0,.05); flex: none; }
.m + .date { margin-top: 14px; }
.date + .m { margin-top: 4px; }
.reply-tabs { height: 45px; flex: none; background: #fff; border-bottom: 1px solid #e5e7eb; display: flex; align-items: center; padding: 0 0 2px 37px; gap: 39px; font-size: 14px; color: #6b7280; }
.rt { display: flex; align-items: center; gap: 7px; }
.rt + .rt { gap: 6px; }
.rt.active { color: #124e3c; }
.rt .ic { color: #1f2937; }
.composer { height: 64px; flex: none; background: #fff; display: flex; align-items: center; padding-left: 10px; }
.comp-icons { display: flex; width: 228px; color: #111827; flex: none; }
.comp-icons span { width: 44px; display: flex; justify-content: center; }
.comp-icons .clip { color: #e8a33a; }
.comp-input { width: 361px; height: 44px; border-radius: 22px; background: #f4f5fb; line-height: 44px; padding-left: 18px; font-size: 14px; font-style: italic; color: #6b7280; flex: none; }
.comp-btn { width: 44px; height: 44px; margin-left: 8px; border-radius: 10px; background: #f4f5fb; display: flex; align-items: center; justify-content: center; color: #111827; margin-top: -4px; flex: none; }
.comp-btn.pale { color: #b0b5bd; }

.popup { position: absolute; left: 49px; top: 107px; width: 238px; height: 167px; background: #fff; border: 1px solid #e5e7eb; border-radius: 12px; box-shadow: 0 6px 20px rgba(0,0,0,.14); z-index: 3; }
.pop-head { height: 57px; border-bottom: 1px solid #e5e7eb; padding: 11px 14px 0 13px; display: flex; }
.pop-title { width: 125px; }
.pop-title strong { display: block; font-size: 13px; line-height: 18px; font-weight: 600; color: #1f2937; margin-top: 1px; }
.pop-gear { margin-top: 8px; color: #1f2937; }
.pop-body { text-align: center; padding-top: 23px; }
.pop-body p { font-size: 12px; line-height: 16px; color: #374151; }
.pop-body a { margin-top: 19px; display: flex; align-items: center; justify-content: center; gap: 9px; font-size: 14.100px; line-height: 18px; color: #1f2937; }
.handle { position: absolute; right: 0; top: 433px; width: 44px; height: 66px; border-radius: 14px 0 0 14px; background: rgba(62,110,96,.7); display: flex; align-items: center; justify-content: center; color: #6f8f85; z-index: 2; }

/* Demo */
.demo { height: 64px; flex: none; display: flex; align-items: center; padding: 0 20px; background: linear-gradient(90deg, #18a34c 0%, #17924a 50%, #166534 100%); color: #eef8f1; box-shadow: 0 -6px 24px rgba(0,0,0,.22); position: relative; z-index: 4; }
.demo-pill { width: 86px; height: 30px; border-radius: 15px; background: rgba(255,255,255,.2); border: 1px solid rgba(255,255,255,.28); display: flex; align-items: center; justify-content: center; gap: 7px; font-size: 12px; font-weight: 800; color: #fff; padding-bottom: 1px; }
.demo-pill .ic { color: #111827; }
.demo p { margin-left: 18px; flex: 1; font-size: 13px; font-weight: 500; white-space: nowrap; letter-spacing: -.12px; }
.demo strong { font-weight: 700; }
.d-btn { height: 44px; border-radius: 10px; background: #fff; display: flex; align-items: center; justify-content: center; gap: 5px; font-size: 13.300px; font-weight: 500; flex: none; box-shadow: 0 2px 6px rgba(0,0,0,.15); }
.create { width: 215px; color: #15803d; padding-right: 1px; }
.create .ic { color: #111; }
.talk { width: 244px; height: 40px; margin-left: 6px; color: #134e3a; font-weight: 600; font-size: 13.500px; letter-spacing: -.3px; }
.talk .ic { color: #111; }
.d-more { width: 120px; height: 44px; margin-left: 6px; border-radius: 10px; background: rgba(255,255,255,.18); color: #fff; display: flex; align-items: center; justify-content: center; gap: 11px; padding-left: 4px; font-size: 13.500px; font-weight: 600; flex: none; }
.d-more .ic:first-child { color: #111; }
.d-more .ic:last-child { margin-left: -7px; }
.d-close { width: 44px; height: 44px; margin-left: 6px; border-radius: 10px; background: rgba(255,255,255,.14); display: flex; align-items: center; justify-content: center; color: #222; flex: none; }
```
